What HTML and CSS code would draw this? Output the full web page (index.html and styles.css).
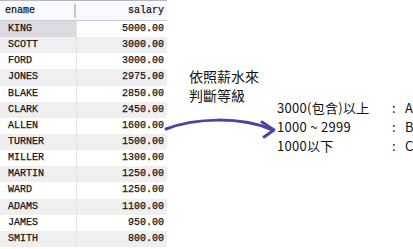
FILE: index.html
```html
<!DOCTYPE html>
<html>
<head>
<meta charset="utf-8">
<link rel="stylesheet" href="styles.css">
</head>
<body>
<div class="page">
  <div class="grid">
    <div class="hrow">
      <div class="hcell name">ename</div>
      <div class="hcell sal">salary</div>
    </div>
    <div class="row"><div class="cell name sel">KING</div><div class="cell sal">5000.00</div></div>
    <div class="row alt"><div class="cell name">SCOTT</div><div class="cell sal">3000.00</div></div>
    <div class="row"><div class="cell name">FORD</div><div class="cell sal">3000.00</div></div>
    <div class="row alt"><div class="cell name">JONES</div><div class="cell sal">2975.00</div></div>
    <div class="row"><div class="cell name">BLAKE</div><div class="cell sal">2850.00</div></div>
    <div class="row alt"><div class="cell name">CLARK</div><div class="cell sal">2450.00</div></div>
    <div class="row"><div class="cell name">ALLEN</div><div class="cell sal">1600.00</div></div>
    <div class="row alt"><div class="cell name">TURNER</div><div class="cell sal">1500.00</div></div>
    <div class="row"><div class="cell name">MILLER</div><div class="cell sal">1300.00</div></div>
    <div class="row alt"><div class="cell name">MARTIN</div><div class="cell sal">1250.00</div></div>
    <div class="row"><div class="cell name">WARD</div><div class="cell sal">1250.00</div></div>
    <div class="row alt"><div class="cell name">ADAMS</div><div class="cell sal">1100.00</div></div>
    <div class="row"><div class="cell name">JAMES</div><div class="cell sal">950.00</div></div>
    <div class="row alt"><div class="cell name">SMITH</div><div class="cell sal">800.00</div></div>
  </div>
  <div class="notes">
    <div class="title">依照薪水來<br>判斷等級</div>
    <div class="rules">
      <div class="rule"><span class="cond">3000(包含)以上</span><span class="colon">:</span><span class="grade">A</span></div>
      <div class="rule"><span class="cond">1000 ~ 2999</span><span class="colon">:</span><span class="grade">B</span></div>
      <div class="rule"><span class="cond">1000以下</span><span class="colon">:</span><span class="grade">C</span></div>
    </div>
  </div>
  <svg class="arrow" width="413" height="249" viewBox="0 0 413 249">
    <path d="M166 129 C 195 118, 240 116, 273 130" fill="none" stroke="#4a44a4" stroke-width="3" stroke-linecap="round"/>
    <path d="M262 122 L 274 130 L 264 137" fill="none" stroke="#4a44a4" stroke-width="3" stroke-linecap="round" stroke-linejoin="round"/>
  </svg>
</div>
</body>
</html>
```
FILE: styles.css
```css
html, body {
  margin: 0;
  padding: 0;
  background: #ffffff;
}
.page {
  position: relative;
  width: 413px;
  height: 249px;
  display: flex;
  overflow: hidden;
}
.grid {
  width: 167px;
  flex: none;
  display: flex;
  flex-direction: column;
  font-family: "Liberation Mono", "Courier New", monospace;
  font-size: 10px;
  color: #151515;
  -webkit-text-stroke: 0.25px #151515;
}
.hrow {
  display: flex;
  height: 19px;
  border-top: 1px solid #b4b8c0;
  border-bottom: 1px solid #c9c9d9;
  background: #f8f8ff;
  align-items: center;
}
.hcell.name {
  width: 76px;
  padding-left: 5px;
  box-sizing: border-box;
  height: 14px;
  line-height: 14px;
  border-right: 2px solid #c4c4cc;
}
.hcell.sal {
  flex: 1;
  text-align: right;
  padding-right: 3px;
}
.row {
  display: flex;
  height: 16.15px;
  line-height: 16px;
  background: #ffffff;
}
.row.alt {
  background: #efeff0;
}
.cell.name {
  width: 77px;
  padding-left: 8px;
  box-sizing: border-box;
  border-right: 1px solid #e2e2ea;
}
.cell.sel {
  background: #dcdae0;
}
.cell.sal {
  flex: 1;
  text-align: right;
  padding-right: 3px;
}
.notes {
  flex: 1;
  display: flex;
  flex-direction: column;
  padding-top: 67px;
  padding-left: 22px;
  font-family: "Noto Sans CJK TC", "Noto Sans", sans-serif;
  color: #111;
}
.title {
  font-size: 14px;
  line-height: 19px;
}
.rules {
  margin-top: -7px;
  margin-left: 88px;
  font-size: 13px;
  line-height: 19px;
}
.rule {
  display: flex;
  white-space: nowrap;
}
.cond {
  width: 115px;
  letter-spacing: 0.3px;
}
.colon {
  width: 13px;
}
.grade {
  width: 10px;
}
.arrow {
  position: absolute;
  left: 0;
  top: 0;
  pointer-events: none;
}
```
